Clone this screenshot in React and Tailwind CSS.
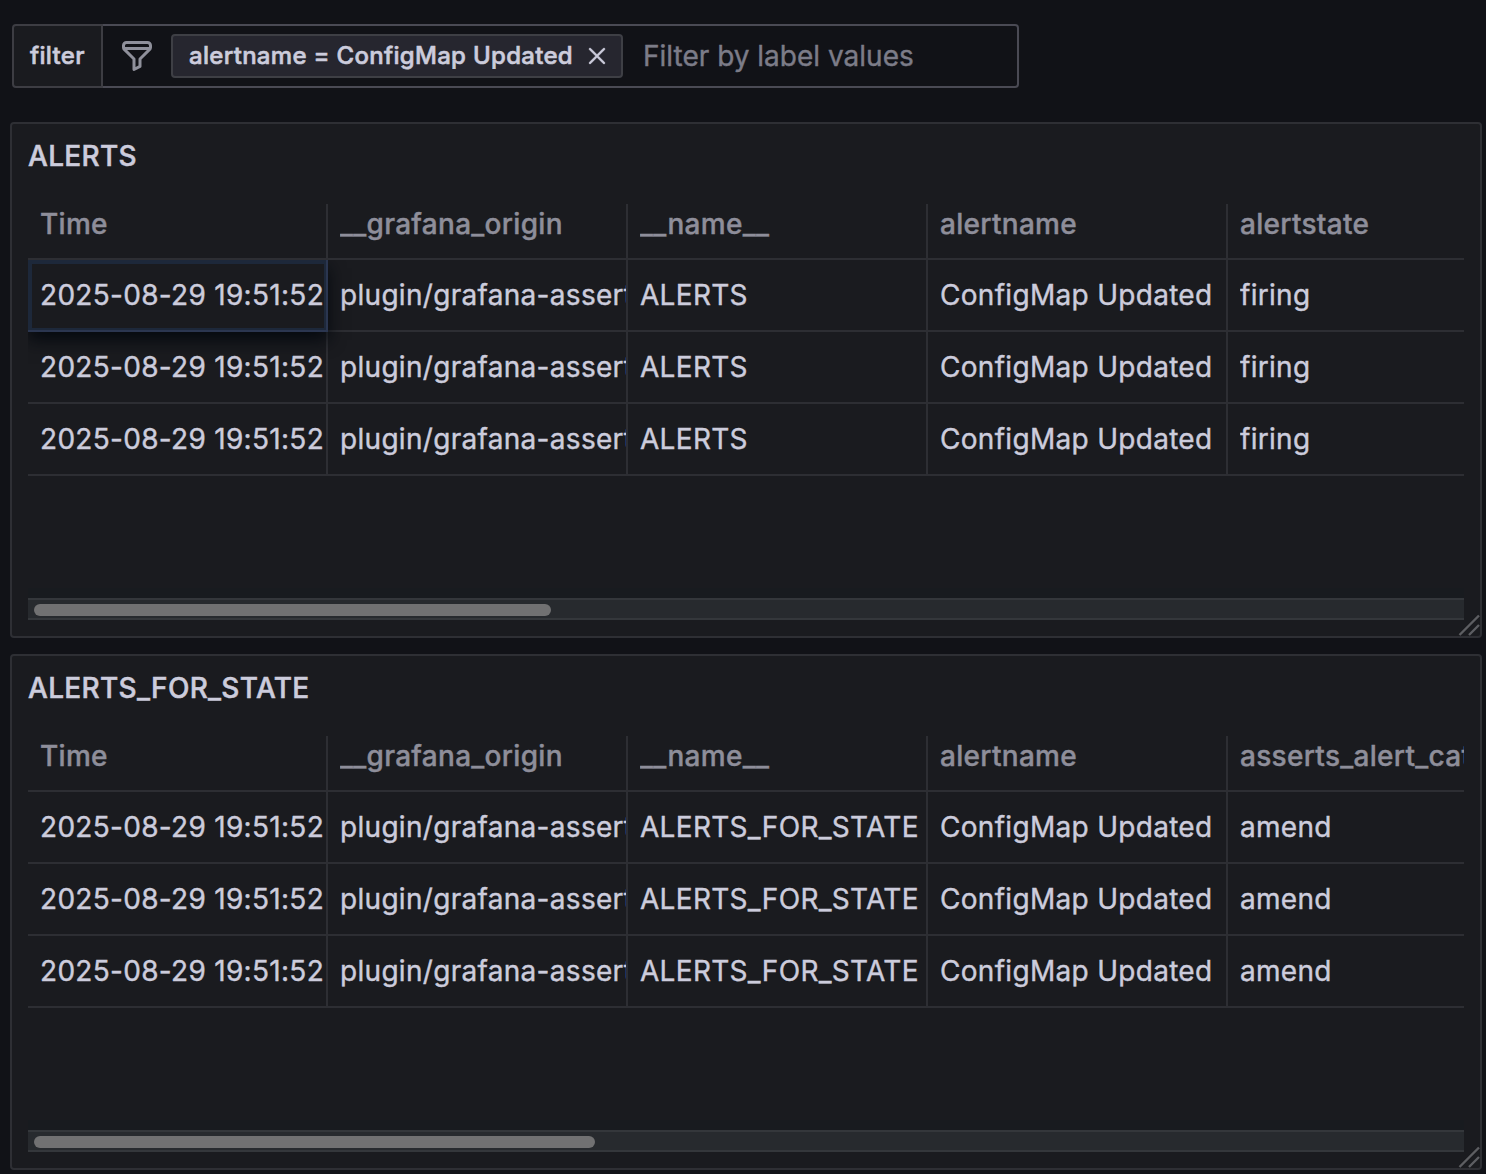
function FilterIcon() {
  return (
    <svg viewBox="0 0 24 24" className="size-9 shrink-0 fill-[#8f909b]">
      <path d="M19,2H5A3,3,0,0,0,2,5V6.17a3,3,0,0,0,.25,1.2l0,.06a2.81,2.81,0,0,0,.59.86L9,14.41V21a1,1,0,0,0,.47.85A1,1,0,0,0,10,22a1,1,0,0,0,.45-.11l4-2A1,1,0,0,0,15,19V14.41l6.12-6.12a2.81,2.81,0,0,0,.59-.86l0-.06A3,3,0,0,0,22,6.17V5A3,3,0,0,0,19,2ZM13.29,13.29A1,1,0,0,0,13,14v4.38l-2,1V14a1,1,0,0,0-.29-.71L5.41,8H18.59ZM20,6H4V5A1,1,0,0,1,5,4H19a1,1,0,0,1,1,1Z" />
    </svg>
  );
}

function CloseIcon() {
  return (
    <svg viewBox="0 0 24 24" className="size-6 shrink-0 fill-[#ccccdc] stroke-[#ccccdc]" strokeWidth="0.4">
      <path d="M13.41,12l6.3-6.29a1,1,0,1,0-1.42-1.42L12,10.59,5.71,4.29A1,1,0,0,0,4.29,5.71L10.59,12l-6.3,6.29a1,1,0,0,0,0,1.42,1,1,0,0,0,1.42,0L12,13.41l6.29,6.3a1,1,0,0,0,1.42,0,1,1,0,0,0,0-1.42Z" />
    </svg>
  );
}

function FilterBar() {
  return (
    <div className="ml-[2px] flex h-16 w-[1007px]">
      <div className="flex w-[91px] shrink-0 items-center rounded-l-[4px] border-2 border-[#3d3d43] bg-[#1a1b1f] pl-4 text-2xl font-medium tracking-[0.0125em] [-webkit-text-stroke:0.6px]">
        <span className="-mt-px">filter</span>
      </div>
      <div className="flex grow items-center rounded-r-[4px] border-2 border-l-0 border-[#4a4a54] pl-4">
        <FilterIcon />
        <div className="ml-4 flex h-11 w-[452px] items-center rounded-[4px] border-2 border-[#3e3f45] bg-[#26262f] pl-4">
          <span className="-mt-px w-[384px] whitespace-nowrap text-2xl font-medium tracking-[0.0125em] [-webkit-text-stroke:0.6px]">
            alertname = ConfigMap Updated
          </span>
          <span className="ml-3">
            <CloseIcon />
          </span>
        </div>
        <span className="ml-5 whitespace-nowrap text-[28px] text-[#7c7c88]">
          Filter by label values
        </span>
      </div>
    </div>
  );
}

const line = "border-[#2d2e33]";

function Row({ cells, header, selected }) {
  return (
    <div className={header ? "relative z-20 flex h-14 bg-[#1a1b1f] font-medium text-[#8e8e9a]" : "flex h-[72px]"}>
      {cells.map((text, i) => (
        <div
          key={i}
          className={
            (header ? "pb-[14px] " : "pb-px ") +
            (selected && i === 0
              ? "relative z-10 flex w-[300px] shrink-0 items-center border-r-2 border-b-2 border-[#2b3650] bg-[#1a1b1f] pl-3 shadow-[0_8px_16px_#05090f]"
              : "flex w-[300px] shrink-0 items-center border-r-2 border-b-2 pl-3 " + line)
          }
        >
          {selected && i === 0 && (
            <div className="absolute inset-0 border-4 border-r-2 border-b-2 border-[#1d283a]" />
          )}
          <span className="relative w-full overflow-hidden leading-10 whitespace-nowrap">{text}</span>
        </div>
      ))}
    </div>
  );
}

function Panel({ title, columns, row, thumb, selectFirst }) {
  return (
    <section className="relative flex h-[516px] w-[1472px] flex-col rounded-[4px] border-2 border-[#2e2f34] bg-[#1a1b1f] px-4">
      <h2 className="flex h-16 shrink-0 items-center text-[28px] font-medium tracking-[0.0107em] [-webkit-text-stroke:0.5px]">
        {title}
      </h2>
      <div className="mt-4 h-[384px] w-[1436px] overflow-hidden text-[28px] tracking-[0.0107em]">
        <Row cells={columns} header />
        <Row cells={row} selected={selectFirst} />
        <Row cells={row} />
        <Row cells={row} />
      </div>
      <div className="h-[10px] w-[1436px] shrink-0 bg-[#181b1f]" />
      <div className="flex h-[22px] w-[1436px] shrink-0 items-end border-y-2 border-[#34373b] bg-[#272a2e] pb-[2px] pl-[6px]">
        <div className={"h-3 rounded-full bg-[#717172] " + thumb} />
      </div>
      <svg viewBox="0 0 22 22" className="absolute right-0 bottom-0 size-[22px]" stroke="#5d5e62" strokeWidth="2.4" fill="none">
        <path d="M1.500 21 21 1.500M11 21 21 11" />
      </svg>
    </section>
  );
}

const time = "2025-08-29 19:51:52";
const origin = "plugin/grafana-asserts";

export default function App() {
  return (
    <main className="flex h-[1174px] w-[1486px] flex-col overflow-hidden bg-[#111217] pt-6 pl-[10px] font-['Inter',sans-serif] leading-none text-[#ccccdc] [-webkit-text-stroke:0.4px]">
      <FilterBar />
      <div className="mt-[34px] flex flex-col gap-4">
        <Panel
          title="ALERTS"
          columns={["Time", "__grafana_origin", "__name__", "alertname", "alertstate"]}
          row={[time, origin, "ALERTS", "ConfigMap Updated", "firing"]}
          thumb="w-[517px]"
          selectFirst
        />
        <Panel
          title="ALERTS_FOR_STATE"
          columns={["Time", "__grafana_origin", "__name__", "alertname", "asserts_alert_category"]}
          row={[time, origin, "ALERTS_FOR_STATE", "ConfigMap Updated", "amend"]}
          thumb="w-[561px]"
        />
      </div>
    </main>
  );
}
